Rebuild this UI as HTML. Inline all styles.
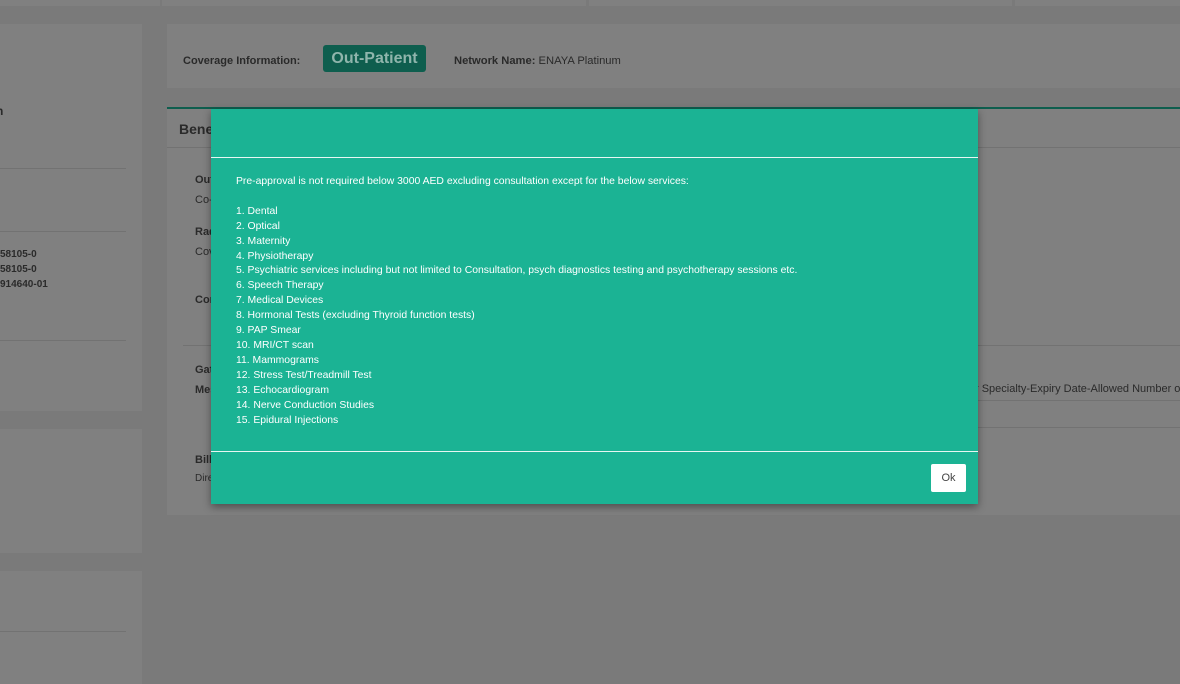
<!DOCTYPE html>
<html><head><style>
*{margin:0;padding:0;box-sizing:border-box}
body{width:1180px;height:684px;background:#7a7a7a;font-family:"Liberation Sans",Arial,sans-serif;position:relative;overflow:hidden;color:#2a2a2a}
.p{position:absolute;background:#808080}
.t{position:absolute;font-size:11px;white-space:nowrap}
.b{font-weight:bold}
.hl{position:absolute;height:1px;background:#727272}
.modal{position:absolute;left:211px;top:109px;width:767px;height:395px;background:#1bb394;box-shadow:0 3px 8px rgba(0,0,0,.4);color:#fff}
.modal .ln{position:absolute;left:0;right:0;height:1px;background:#e8f7f3}
.body{position:absolute;left:25px;top:66px;font-size:10.4px;line-height:14.9px}
.ok{position:absolute;left:720px;top:355px;width:35px;height:28px;background:#fff;border-radius:2px;color:#444;font-size:11px;text-align:center;line-height:28px}
</style></head><body>
<div class="p" style="left:0;top:0;width:160px;height:6px"></div>
<div class="p" style="left:162px;top:0;width:424px;height:6px"></div>
<div class="p" style="left:589px;top:0;width:423px;height:6px"></div>
<div class="p" style="left:1015px;top:0;width:165px;height:6px"></div>

<div class="p" style="left:0;top:24px;width:142px;height:387px"></div>
<div class="t b" style="left:-4px;top:104px;font-size:12px">n</div>
<div class="hl" style="left:0;top:168px;width:126px"></div>
<div class="hl" style="left:0;top:231px;width:126px"></div>
<div class="t b" style="left:0;top:249px;font-size:10px">58105-0</div>
<div class="t b" style="left:0;top:264px;font-size:10px">58105-0</div>
<div class="t b" style="left:0;top:279px;font-size:10px">914640-01</div>
<div class="hl" style="left:0;top:340px;width:126px"></div>
<div class="p" style="left:0;top:429px;width:142px;height:124px"></div>
<div class="p" style="left:0;top:571px;width:142px;height:113px"></div>
<div class="hl" style="left:0;top:631px;width:126px"></div>

<div class="p" style="left:167px;top:24px;width:1013px;height:64px"></div>
<div class="t b" style="left:183px;top:55px">Coverage Information:</div>
<div style="position:absolute;left:323px;top:45px;width:103px;height:27px;background:#0e5e4e;border-radius:3px;color:#8fb5ac;font-weight:bold;font-size:16px;text-align:center;line-height:27px">Out-Patient</div>
<div class="t" style="left:454px;top:55px;font-size:11.2px"><b>Network Name:</b> ENAYA Platinum</div>

<div class="p" style="left:167px;top:107px;width:1013px;height:408px;border-top:2px solid #0e5e4e"></div>
<div class="t b" style="left:179px;top:121px;font-size:14px">Bene</div>
<div class="hl" style="left:167px;top:147px;width:1013px"></div>
<div class="t b" style="left:195px;top:174px">Out</div>
<div class="t" style="left:195px;top:194px">Co-</div>
<div class="t b" style="left:195px;top:226px">Rad</div>
<div class="t" style="left:195px;top:246px">Cov</div>
<div class="t b" style="left:195px;top:294px">Con</div>
<div class="hl" style="left:183px;top:345px;width:997px"></div>
<div class="t b" style="left:195px;top:364px">Gat</div>
<div class="t b" style="left:195px;top:384px">Mes</div>
<div class="t" style="left:975px;top:383px">r Specialty-Expiry Date-Allowed Number of</div>
<div class="hl" style="left:978px;top:400px;width:202px"></div>
<div class="hl" style="left:978px;top:427px;width:202px"></div>
<div class="t b" style="left:195px;top:454px">Bill</div>
<div class="t" style="left:195px;top:473px;font-size:10px">Dire</div>

<div class="modal">
<div class="ln" style="top:48px"></div>
<div class="body">Pre-approval is not required below 3000 AED excluding consultation except for the below services:<br><br>
1. Dental<br>2. Optical<br>3. Maternity<br>4. Physiotherapy<br>5. Psychiatric services including but not limited to Consultation, psych diagnostics testing and psychotherapy sessions etc.<br>6. Speech Therapy<br>7. Medical Devices<br>8. Hormonal Tests (excluding Thyroid function tests)<br>9. PAP Smear<br>10. MRI/CT scan<br>11. Mammograms<br>12. Stress Test/Treadmill Test<br>13. Echocardiogram<br>14. Nerve Conduction Studies<br>15. Epidural Injections</div>
<div class="ln" style="top:342px"></div>
<div class="ok">Ok</div>
</div>
</body></html>
